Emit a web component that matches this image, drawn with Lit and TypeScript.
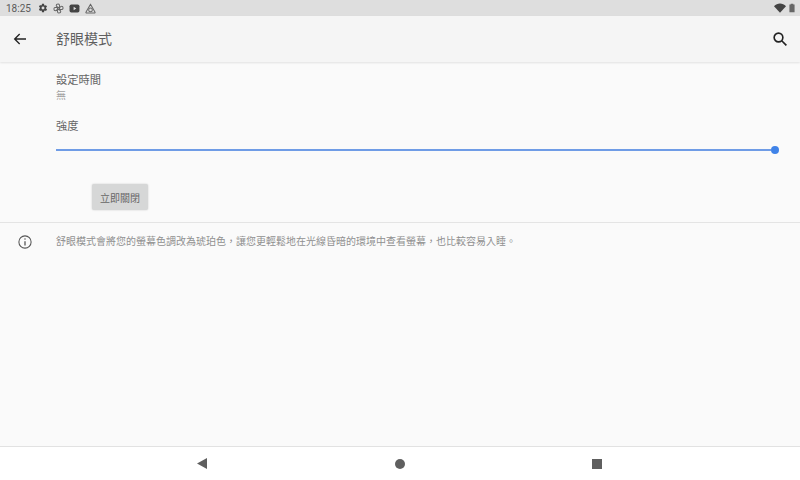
import { LitElement, html, css } from "lit";
import { customElement } from "lit/decorators.js";

const INFO_TEXT =
  "舒眼模式會將您的螢幕色調改為琥珀色\uFF0C讓您更輕鬆地在光線昏暗的環境中查看螢幕\uFF0C也比較容易入睡。";

@customElement("app-root")
export class AppRoot extends LitElement {
  static styles = css`
    :host {
      display: flex;
      flex-direction: column;
      width: 800px;
      height: 480px;
      overflow: hidden;
      background: #fafafa;
      font-family: Roboto, "Noto Sans CJK TC", sans-serif;
      color: #5f6368;
    }
    svg { display: block; flex: none; }
    .status {
      height: 16px;
      flex: none;
      background: #dedede;
      display: flex;
      align-items: center;
      padding: 0 6px;
      box-sizing: border-box;
      font-size: 10px;
      color: #5a5a5a;
    }
    .time { width: 32px; }
    .notifs { display: flex; gap: 5px; align-items: center; }
    .spacer { flex: 1; }
    .sys { display: flex; gap: 3px; align-items: center; margin-right: -1px; }
    .bar {
      height: 46px;
      flex: none;
      background: #f5f5f5;
      display: flex;
      align-items: center;
      padding: 0 11px 0 12px;
      box-shadow: 0 1px 2px rgba(0,0,0,0.1);
      position: relative;
    }
    .title { font-size: 14px; margin: 0 0 2px 28px; color: #5f5f5f; }
    main { flex: 1; display: flex; flex-direction: column; min-height: 0; }
    .settings { padding: 11px 21px 0 56px; }
    .label { font-size: 11.25px; line-height: 16px; color: #666; }
    .sub { font-size: 10px; line-height: 13px; color: #a2a2a2; }
    .strength { margin-top: 17px; }
    .slider { display: flex; align-items: center; margin-top: 10px; height: 10px; }
    .track { flex: 1; height: 2px; background: #6f9ce6; }
    .thumb { width: 8px; height: 8px; border-radius: 50%; background: #3f83e8; }
    .action { padding: 29px 0 0 92px; }
    button {
      display: block;
      width: 56px;
      height: 26px;
      padding: 0;
      border: 0;
      border-radius: 2px;
      background: #d6d7d7;
      box-shadow: 0 0 2px rgba(0,0,0,0.2);
      font: inherit;
      font-size: 10px;
      color: #666;
    }
    .info {
      margin-top: 12px;
      border-top: 1px solid #e4e4e4;
      display: flex;
      align-items: flex-start;
      padding: 12px 0 0 18px;
    }
    .info p {
      margin: 0 0 0 24px;
      font-size: 10px;
      line-height: 14px;
      color: #909090;
    }
    .nav {
      height: 34px;
      flex: none;
      background: #fff;
      border-top: 1px solid #e2e2e2;
      box-sizing: border-box;
      display: grid;
      grid-template-columns: 197px 10px 188px 10px 187px 10px;
      align-items: center;
    }
    .nav svg:nth-child(1) { grid-column: 2; }
    .nav svg:nth-child(2) { grid-column: 4; }
    .nav svg:nth-child(3) { grid-column: 6; }
  `;

  render() {
    return html`
      <div class="status">
        <span class="time">18:25</span>
        <div class="notifs">
          <svg width="10" height="10" viewBox="0 0 24 24" fill="#444"><path fill-rule="evenodd" d="M19.4 13a7.5 7.5 0 0 0 0-2l2.3-1.8-2.4-4.1-2.7 1.1a7.5 7.5 0 0 0-1.7-1L14.500 2h-5l-.4 2.900a7.500 7.500 0 0 0-1.700 1L4.700 4.800 2.300 8.900 4.600 10.700a7.500 7.500 0 0 0 0 2L2.300 14.800l2.400 4.100 2.700-1.100a7.500 7.500 0 0 0 1.700 1l.4 3.200h5l.4-3.200a7.500 7.500 0 0 0 1.700-1l2.700 1.100 2.400-4.100zM12 15.500a3.500 3.500 0 1 1 0-7 3.500 3.500 0 0 1 0 7z"/></svg>
          <svg width="11" height="11" viewBox="0 0 24 24" fill="none" stroke="#666" stroke-width="2.200"><circle cx="12" cy="12" r="2"/><path d="M12 10C9 9 7 8 7 5.500 7 3 9 2 11 2c3 0 4 3 3 8zM14 12c1-3 2-5 4.500-5C21 7 22 9 22 11c0 3-3 4-8 3zM12 14c3 1 5 2 5 4.500 0 2.500-2 3.500-4 3.500-3 0-4-3-3-8zM10 12c-1 3-2 5-4.500 5C3 17 2 15 2 13c0-3 3-4 8-3z"/></svg>
          <svg width="11" height="9" viewBox="0 0 24 20"><rect x="1" y="1" width="22" height="18" rx="4" fill="#444"/><path d="M10 6l6 4-6 4z" fill="#ddd"/></svg>
          <svg width="11" height="11" viewBox="0 0 24 24" fill="none" stroke="#666" stroke-width="2.200" stroke-linejoin="round"><path d="M12 2.500 22 20a1.500 1.500 0 0 1-1.300 2H3.300A1.500 1.500 0 0 1 2 20z"/><circle cx="12" cy="15" r="4"/></svg>
        </div>
        <div class="spacer"></div>
        <div class="sys">
          <svg width="12" height="10" viewBox="0 0 24 20" fill="#444"><path d="M0 6.500C3.500 3 7.500 1 12 1s8.500 2 12 5.500L12 19.500z"/></svg>
          <svg width="6" height="10" viewBox="0 0 14 20"><path d="M4 0h6v2h3v18H1V2h3z" fill="#666"/></svg>
        </div>
      </div>
      <header class="bar">
        <svg width="16" height="16" viewBox="0 0 24 24" fill="none" stroke="#222" stroke-width="2"><path d="M21 12H4M11.500 4.500 4 12l7.500 7.500"/></svg>
        <span class="title">舒眼模式</span>
        <div class="spacer"></div>
        <svg width="18" height="18" viewBox="0 0 24 24" fill="none" stroke="#222" stroke-width="2.200"><circle cx="10" cy="10" r="5.800"/><path d="M14.300 14.300 20.500 20.500"/></svg>
      </header>
      <main>
        <section class="settings">
          <div class="label">設定時間</div>
          <div class="sub">無</div>
          <div class="strength label">強度</div>
          <div class="slider"><div class="track"></div><div class="thumb"></div></div>
        </section>
        <div class="action"><button>立即關閉</button></div>
        <div class="info">
          <svg width="14" height="14" viewBox="0 0 24 24" fill="none" stroke="#555" stroke-width="1.800"><circle cx="12" cy="12" r="10.500"/><path d="M12 10.500V18" stroke-width="2.200"/><circle cx="12" cy="7" r="1.300" fill="#555" stroke="none"/></svg>
          <p>${INFO_TEXT}</p>
        </div>
      </main>
      <nav class="nav">
        <svg width="10" height="11" viewBox="0 0 10 11"><path d="M0 5.500 10 0v11z" fill="#5f5f5f"/></svg>
        <svg width="10" height="10" viewBox="0 0 10 10"><circle cx="5" cy="5" r="5" fill="#5f5f5f"/></svg>
        <svg width="10" height="10" viewBox="0 0 10 10"><rect width="10" height="10" fill="#5f5f5f"/></svg>
      </nav>
    `;
  }
}
